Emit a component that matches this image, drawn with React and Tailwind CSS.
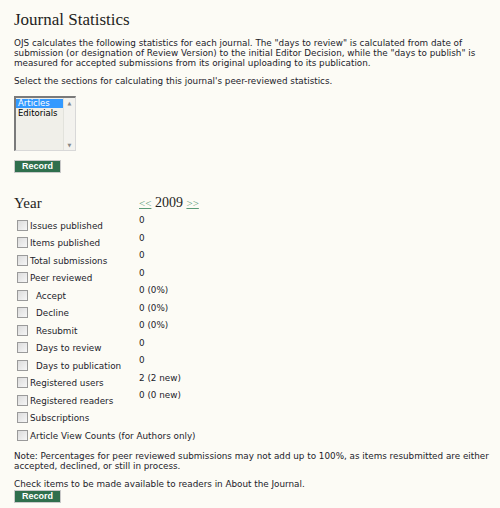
import React from 'react';

const rows = [
  { label: 'Issues published', value: '0' },
  { label: 'Items published', value: '0' },
  { label: 'Total submissions', value: '0' },
  { label: 'Peer reviewed', value: '0' },
  { label: 'Accept', value: '0 (0%)', indent: true },
  { label: 'Decline', value: '0 (0%)', indent: true },
  { label: 'Resubmit', value: '0 (0%)', indent: true },
  { label: 'Days to review', value: '0', indent: true },
  { label: 'Days to publication', value: '0', indent: true },
  { label: 'Registered users', value: '2 (2 new)' },
  { label: 'Registered readers', value: '0 (0 new)' },
  { label: 'Subscriptions', value: '' },
  { label: 'Article View Counts (for Authors only)', value: '' },
];

function Checkbox() {
  return (
    <span className="inline-block w-[11px] h-[11px] border border-[#9a9a9a] bg-gradient-to-br from-[#dcdcdc] to-[#f6f6f6] shrink-0" />
  );
}

function RecordButton() {
  return (
    <button className="block w-[47px] h-[13px] bg-[#2f6f4d] border border-[#c9c9c9] text-white font-bold text-[9px] leading-[11px] font-['Liberation_Sans',sans-serif]">
      Record
    </button>
  );
}

export default function App() {
  return (
    <div className="w-[500px] h-[508px] bg-[#fcfbf5] text-[#22222a] font-['DejaVu_Sans',sans-serif] text-[8.8px] leading-[10px] pl-[14px] pr-[10px] pt-[10px]">
      <h2 className="font-['Liberation_Serif',serif] text-[17px] leading-[20px] text-[#1e1e22]">Journal Statistics</h2>

      <p className="mt-[8px] pr-[14px]">
        OJS calculates the following statistics for each journal. The "days to review" is calculated from date of submission (or designation of Review Version) to the initial Editor Decision, while the "days to publish" is measured for accepted submissions from its original uploading to its publication.
      </p>

      <p className="mt-[8px]">Select the sections for calculating this journal's peer-reviewed statistics.</p>

      <div className="mt-[10px] w-[62px] h-[55px] border-l-2 border-t-2 border-[#7a7a7a] border-r border-b border-r-[#d8d8d8] border-b-[#d8d8d8] bg-[#f0efe9] flex">
        <div className="flex-1 pt-[1px]">
          <div className="bg-[#3399ff] text-white px-[2px] leading-[9px] text-[8.5px]">Articles</div>
          <div className="px-[2px] leading-[10px] text-black text-[8.5px]">Editorials</div>
        </div>
        <div className="w-[12px] bg-[#f3f2ee] border-l border-[#e2e2dc] flex flex-col justify-between items-center py-[2px] text-[#888] text-[5px] leading-[6px]">
          <span>▲</span>
          <span>▼</span>
        </div>
      </div>

      <div className="mt-[9px]">
        <RecordButton />
      </div>

      <div className="mt-[22px] flex items-end">
        <div className="w-[125px] font-['Liberation_Serif',serif] text-[15px] leading-[16px] text-[#1e1e22]">Year</div>
        <div className="font-['Liberation_Serif',serif] text-[14px] leading-[16px]">
          <span className="text-[#5a9a78] underline text-[11px]">&lt;&lt;</span>{' '}
          <span className="text-[#1e1e22]">2009</span>{' '}
          <span className="text-[#5a9a78] underline text-[11px]">&gt;&gt;</span>
        </div>
      </div>

      <div className="mt-[3px] flex flex-col">
        {rows.map((r) => (
          <div key={r.label} className="flex h-[17.5px]">
            <div className="w-[125px] flex items-end pb-[1px] pl-[3px]">
              <Checkbox />
              <span className={r.indent ? 'ml-[8px] whitespace-nowrap' : 'ml-[2px] whitespace-nowrap'}>{r.label}</span>
            </div>
            <div className="pt-[1px]">{r.value}</div>
          </div>
        ))}
      </div>

      <p className="mt-[9px]">
        Note: Percentages for peer reviewed submissions may not add up to 100%, as items resubmitted are either accepted, declined, or still in process.
      </p>

      <p className="mt-[8px]">Check items to be made available to readers in About the Journal.</p>
      <div className="mt-[1px]">
        <RecordButton />
      </div>
    </div>
  );
}
